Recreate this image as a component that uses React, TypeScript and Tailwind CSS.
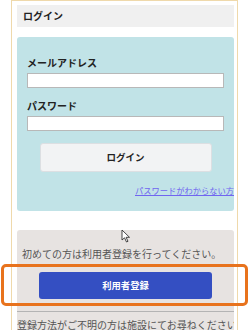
export default function App() {
  const jp = { fontFamily: '"Noto Sans CJK JP", "Noto Sans", sans-serif' };

  return (
    <div
      className="relative w-[250px] h-[330px] overflow-hidden bg-white text-[#222]"
      style={jp}
    >
      <div className="ml-[11px] w-[227px] h-[340px] border-x border-t border-[#efd9ab] bg-white pt-[4px] pl-[5px] pr-[3px]">
        {/* heading */}
        <div className="h-[22px] bg-[#f0f0f0] flex items-center pl-[6px] text-[10px] font-bold leading-none">
          ログイン
        </div>

        {/* login form */}
        <div className="mt-[10px] rounded-[3px] bg-[#c1e3e7] px-[10px] pt-[19px] pb-[15px]">
          <div className="h-[14px] text-[10px] leading-[14px] font-bold">メールアドレス</div>
          <div className="mt-[3px] h-[15px] bg-white border border-[#b8b8b8]" />

          <div className="mt-[11px] h-[14px] text-[10px] leading-[14px] font-bold">パスワード</div>
          <div className="mt-[3px] h-[15px] bg-white border border-[#b8b8b8]" />

          <button className="mt-[12px] mx-auto flex items-center justify-center w-[172px] h-[29px] rounded-[3px] bg-[#f2f3f4] border border-[#dcdfe2] text-[9.5px] font-bold">
            ログイン
          </button>

          <div className="mt-[12px] -mr-[10px] flex justify-end">
            <span className="text-[8.25px] leading-[12px] text-[#7065f0] underline">
              パスワードがわからない方
            </span>
          </div>
        </div>

        {/* register */}
        <div className="mt-[19px] rounded-[3px] bg-[#e7e3e1] pt-[17px] h-[120px] overflow-hidden">
          <div className="pl-[5px] h-[14px] text-[10px] leading-[14px] text-[#555] whitespace-nowrap">
            初めての方は利用者登録を行ってください。
          </div>
          <button className="mt-[11px] mx-auto flex items-center justify-center w-[173px] h-[27px] rounded-[3px] bg-[#344fc2] text-white text-[9.3px] font-bold">
            利用者登録
          </button>
          <div className="mt-[12px] h-px bg-[#b4b4b4]" />
          <div className="mt-[6px] h-[14px] text-[10px] leading-[14px] text-[#555] whitespace-nowrap">
            登録方法がご不明の方は施設にてお尋ねください。
          </div>
        </div>
      </div>

      {/* highlight */}
      <div className="absolute left-[1px] top-[264px] w-[247px] h-[42px] border-[3px] border-[#e8731d] rounded-[5px]" />

      {/* mouse cursor */}
      <svg
        className="absolute left-[121px] top-[229px]"
        width="10"
        height="14"
        viewBox="0 0 10 14"
      >
        <path
          d="M1 1 L1 11 L3.5 8.8 L5.5 13 L7 12.3 L5.1 8.3 L8.5 8.3 Z"
          fill="#fff"
          stroke="#333"
          strokeWidth="0.9"
          strokeLinejoin="round"
        />
      </svg>
    </div>
  );
}
